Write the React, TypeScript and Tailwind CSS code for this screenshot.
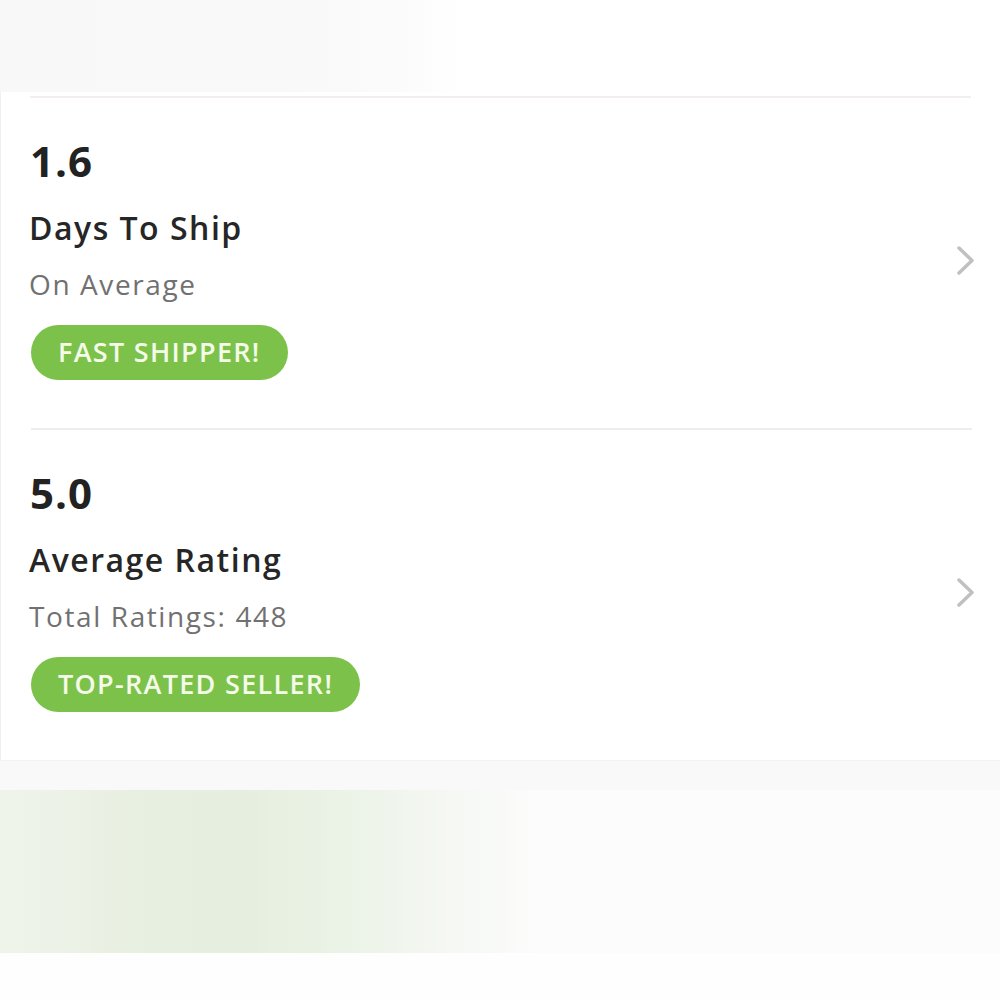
import React from 'react';

interface Stat {
  value: string;
  title: string;
  sub: string;
  badge: string;
}

const stats: Stat[] = [
  { value: '1.6', title: 'Days To Ship', sub: 'On Average', badge: 'FAST SHIPPER!' },
  { value: '5.0', title: 'Average Rating', sub: 'Total Ratings: 448', badge: 'TOP-RATED SELLER!' },
];

function Chevron() {
  return (
    <svg width="20" height="30" viewBox="0 0 20 30" fill="none" className="shrink-0">
      <polyline
        points="3,3 16,15.5 3,28"
        stroke="#c0c0c0"
        strokeWidth="3.5"
        strokeLinecap="round"
        strokeLinejoin="round"
      />
    </svg>
  );
}

function StatRow({ stat }: { stat: Stat }) {
  return (
    <div className="flex items-center justify-between pl-[28px] pr-[24px] pt-[42px] pb-[48px]">
      <div className="flex flex-col items-start">
        <div className="pl-[1px] text-[42px] leading-none font-bold text-[#222] tracking-[1px]">{stat.value}</div>
        <div className="mt-[30px] text-[32px] leading-none font-semibold text-[#262626] tracking-[1.5px]">{stat.title}</div>
        <div className="mt-[26px] text-[28px] leading-none text-[#717171] tracking-[1.6px]">{stat.sub}</div>
        <div className="mt-[27px] ml-[2px] h-[55px] flex items-center rounded-full bg-[#7cc24a] pl-[27px] pr-[27px] text-[27px] font-semibold text-[#f4fbe9] tracking-[1.3px]">
          {stat.badge}
        </div>
      </div>
      <Chevron />
    </div>
  );
}

export default function App() {
  return (
    <div className="w-[1000px] h-[1000px] bg-white overflow-hidden font-['Open_Sans',sans-serif]">
      {/* faded header strip */}
      <div className="h-[92px] bg-[linear-gradient(to_right,#f8f8f8_0%,#f9f9f9_30%,#fbfbfb_40%,#ffffff_46%)]" />

      {/* stats card */}
      <div className="bg-white border-l border-[#efefef]">
        <div className="h-[4px]" />
        <div className="mx-[29px] h-[2px] bg-[#f2eeee]" />
        <StatRow stat={stats[0]} />
        <div className="ml-[30px] mr-[28px] h-[2px] bg-[#ededed]" />
        <StatRow stat={stats[1]} />
      </div>

      {/* lower bands */}
      <div className="h-[30px] bg-[#faf9fa] border-t border-[#f3f1f1]" />
      <div className="h-[163px] bg-[linear-gradient(to_right,#eff4eb_0%,#e7efe0_15%,#e6efdf_25%,#ecf3e8_36%,#f5f8f3_45%,#fcfcfc_54%,#fdfcfd_100%)]" />
      <div className="h-[47px] bg-[#fefefe]" />
    </div>
  );
}
